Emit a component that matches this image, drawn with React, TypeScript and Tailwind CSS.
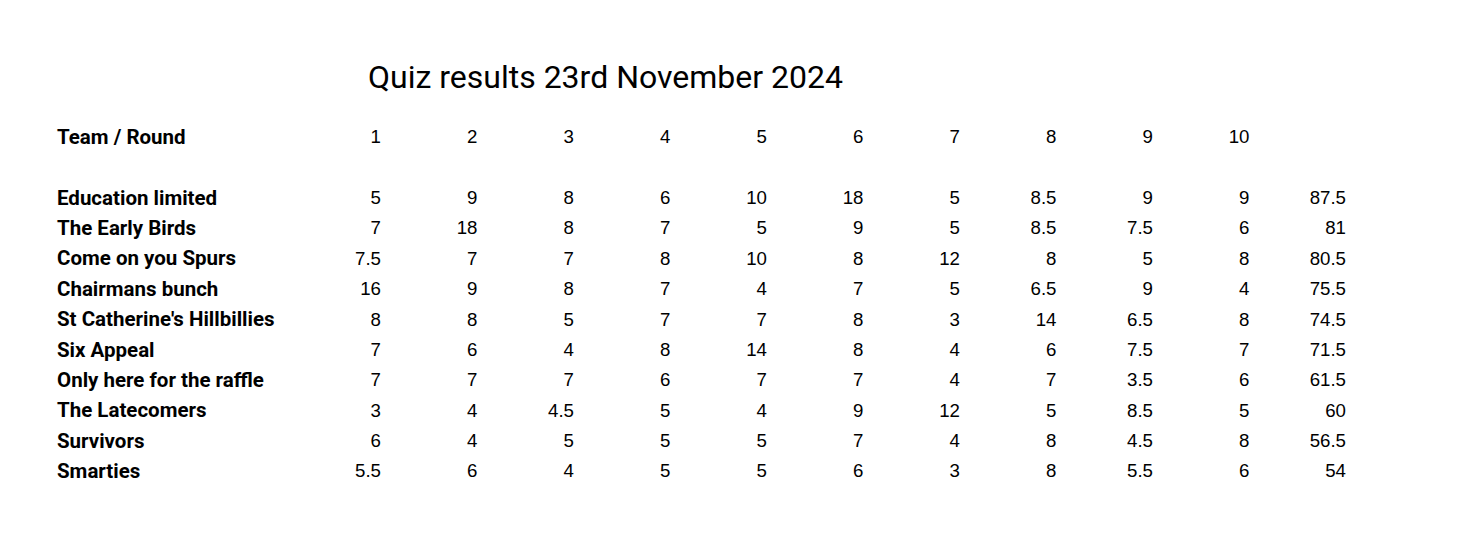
import React from 'react';

type Team = { name: string; scores: string[]; total: string };

const teams: Team[] = [
  { name: 'Education limited', scores: ['5', '9', '8', '6', '10', '18', '5', '8.5', '9', '9'], total: '87.5' },
  { name: 'The Early Birds', scores: ['7', '18', '8', '7', '5', '9', '5', '8.5', '7.5', '6'], total: '81' },
  { name: 'Come on you Spurs', scores: ['7.5', '7', '7', '8', '10', '8', '12', '8', '5', '8'], total: '80.5' },
  { name: 'Chairmans bunch', scores: ['16', '9', '8', '7', '4', '7', '5', '6.5', '9', '4'], total: '75.5' },
  { name: "St Catherine's Hillbillies", scores: ['8', '8', '5', '7', '7', '8', '3', '14', '6.5', '8'], total: '74.5' },
  { name: 'Six Appeal', scores: ['7', '6', '4', '8', '14', '8', '4', '6', '7.5', '7'], total: '71.5' },
  { name: 'Only here for the raffle', scores: ['7', '7', '7', '6', '7', '7', '4', '7', '3.5', '6'], total: '61.5' },
  { name: 'The Latecomers', scores: ['3', '4', '4.5', '5', '4', '9', '12', '5', '8.5', '5'], total: '60' },
  { name: 'Survivors', scores: ['6', '4', '5', '5', '5', '7', '4', '8', '4.5', '8'], total: '56.5' },
  { name: 'Smarties', scores: ['5.5', '6', '4', '5', '5', '6', '3', '8', '5.5', '6'], total: '54' },
];

const rounds = ['1', '2', '3', '4', '5', '6', '7', '8', '9', '10'];

const Row = ({ label, cells }: { label: string; cells: string[] }) => (
  <div className="grid grid-cols-[227.5px_repeat(11,96.5px)] h-[30.4px] items-center">
    <div className="font-['Roboto',sans-serif] font-bold text-[20.5px] text-black whitespace-nowrap">{label}</div>
    {cells.map((c, i) => (
      <div key={i} className="text-right font-['Liberation_Sans',Arial,sans-serif] text-[18.67px] text-black">
        {c}
      </div>
    ))}
  </div>
);

export default function App() {
  return (
    <div className="w-[1471px] h-[534px] bg-white pl-[57px] pt-[57px]">
      <div className="h-[64.8px] pl-[311px] font-['Roboto',sans-serif] text-[32px] leading-[40px] text-black">
        Quiz results 23rd November 2024
      </div>
      <Row label="Team / Round" cells={[...rounds, '']} />
      <div className="h-[30.4px]" />
      {teams.map((t) => (
        <Row key={t.name} label={t.name} cells={[...t.scores, t.total]} />
      ))}
    </div>
  );
}
